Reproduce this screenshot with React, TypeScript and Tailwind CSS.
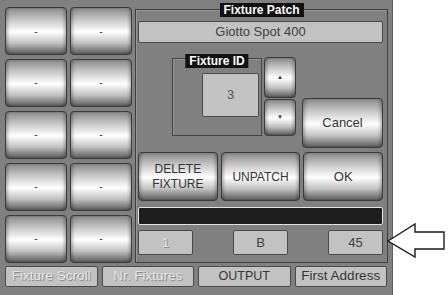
import React from "react";

const metal =
  "rounded-[4px] border border-[#3a3a3a] bg-[linear-gradient(180deg,#8a8a8a_0%,#cdcdcd_28%,#ffffff_52%,#c2c2c2_76%,#5c5c5c_100%)] shadow-[inset_3px_0_3px_-1px_rgba(0,0,0,0.25),inset_-3px_0_3px_-1px_rgba(0,0,0,0.25)] flex items-center justify-center text-[#333333]";

const field =
  "bg-[#c2c2c2] border border-[#4a4a4a] rounded-[2px] flex items-center justify-center";

const dim = "text-[#e4e4e4] [text-shadow:1px_1px_0_#8c8c8c]";

function SlotButton() {
  return (
    <div className={`${metal} h-[48px] text-[10px] text-[#555]`}>-</div>
  );
}

function Legend({ children }: { children: React.ReactNode }) {
  return (
    <div className="absolute left-1/2 -translate-x-1/2 bg-[#111111] text-white font-bold text-[12px] leading-[14px] px-[4px] whitespace-nowrap">
      {children}
    </div>
  );
}

export default function App() {
  return (
    <div className="w-[448px] h-[295px] flex bg-white font-['Liberation_Sans',Arial,sans-serif] overflow-hidden">
      <div className="w-[393px] h-[295px] bg-[#808080] border-r border-[#5e5e5e] flex flex-col">
        <div className="flex pl-[5px] pt-[7px]">
          <div className="grid grid-cols-[62px_62px] gap-x-[3px] gap-y-[3.5px]">
            {Array.from({ length: 10 }).map((_, i) => (
              <SlotButton key={i} />
            ))}
          </div>

          <div className="relative ml-[3px] mt-[2px] w-[253px] h-[254px] border border-[#3e3e3e] shadow-[inset_1px_1px_0_#959595] pl-[2px] pr-[4px] pt-[11px] flex flex-col">
            <div className="-top-[7px] absolute left-0 right-0">
              <Legend>Fixture Patch</Legend>
            </div>

            <div className={`${field} h-[22px] text-[13px] text-[#404040]`}>
              Giotto Spot 400
            </div>

            <div className="flex mt-[14px] h-[91px]">
              <div className="relative ml-[34px] mt-[1px] w-[90px] h-[78px] border border-[#454545] shadow-[inset_1px_1px_0_#939393] flex justify-end pr-[2px] pt-[14px]">
                <div className="absolute -top-[5px] left-0 right-0">
                  <Legend>Fixture ID</Legend>
                </div>
                <div className={`${field} w-[57px] h-[44px] text-[13px] text-[#555]`}>
                  3
                </div>
              </div>

              <div className="ml-[2px] w-[32px] flex flex-col gap-[1px]">
                <div className={`${metal} h-[41px] text-[6px] text-[#222]`}>▲</div>
                <div className={`${metal} h-[37px] text-[6px] text-[#222]`}>▼</div>
              </div>

              <div className={`${metal} ml-[6px] self-end w-[81px] h-[50px] text-[13px]`}>
                Cancel
              </div>
            </div>

            <div className="flex gap-[3px] mt-[4px] h-[49px]">
              <div className={`${metal} flex-1 text-[12px] leading-[15px] text-center`}>
                DELETE
                <br />
                FIXTURE
              </div>
              <div className={`${metal} flex-1 text-[12px]`}>UNPATCH</div>
              <div className={`${metal} flex-1 text-[13px]`}>OK</div>
            </div>

            <div className="mt-[6px] h-[18px] bg-[#1e1e1e] border border-[#e2e2e2] rounded-[2px]" />

            <div className="flex justify-between mt-[5px]">
              <div className={`${field} w-[55px] h-[25px] text-[13px] ${dim}`}>1</div>
              <div className={`${field} w-[55px] h-[25px] text-[13px] text-[#404040]`}>B</div>
              <div className={`${field} w-[55px] h-[25px] text-[13px] text-[#404040]`}>45</div>
            </div>
          </div>
        </div>

        <div className="flex gap-[4px] pl-[5px] w-[387px] mt-[3px]">
          <div className={`${field} flex-1 h-[21px] text-[13.5px] ${dim}`}>Fixture Scroll</div>
          <div className={`${field} flex-1 h-[21px] text-[13.5px] ${dim}`}>Nr. Fixtures</div>
          <div className={`${field} flex-1 h-[21px] text-[12.5px] text-[#353535]`}>OUTPUT</div>
          <div className={`${field} flex-1 h-[21px] text-[13.5px] text-[#353535] whitespace-nowrap`}>First Address</div>
        </div>
      </div>

      <div className="relative flex-1">
        <svg
          className="absolute top-0 -left-[6px] overflow-visible"
          width="61"
          height="295"
          viewBox="0 0 61 295"
        >
          <polygon
            points="1,241 28,224 28,232 57,232 57,249 28,249 28,257"
            fill="white"
            stroke="#1a1a1a"
            strokeWidth="1.4"
            strokeLinejoin="miter"
          />
        </svg>
      </div>
    </div>
  );
}
